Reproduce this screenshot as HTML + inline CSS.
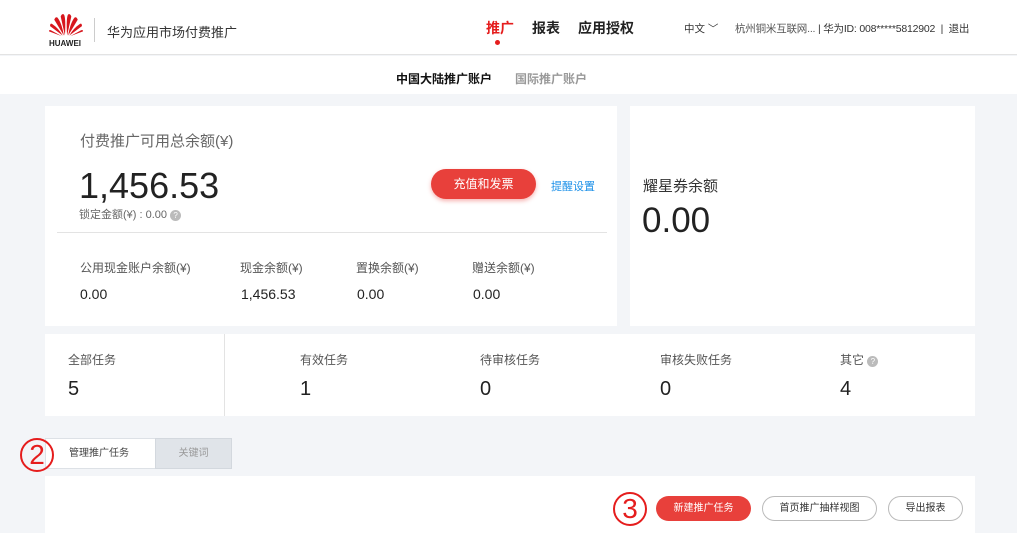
<!DOCTYPE html>
<html><head><meta charset="utf-8"><style>
*{margin:0;padding:0;box-sizing:border-box}
body{width:1017px;height:533px;overflow:hidden;background:#f3f5f8;font-family:"Liberation Sans","Noto Sans CJK SC",sans-serif;color:#333;position:relative}
.a{position:absolute;white-space:nowrap}
.w{position:absolute;background:#fff}
</style></head><body>
<div class="w" style="left:0;top:0;width:1017px;height:55px;border-bottom:1px solid #e3e3e3"></div>
<svg class="a" style="left:49px;top:12px" width="34" height="26" viewBox="0 0 32 22">
<g fill="#d7161d">
<path d="M15 21 L11 3 Q12 0 14 1 Q16 4 15 21Z"/>
<path d="M17 21 L21 3 Q20 0 18 1 Q16 4 17 21Z"/>
<path d="M14 21 L5 6 Q6 3 8 4 Q12 9 14 21Z"/>
<path d="M18 21 L27 6 Q26 3 24 4 Q20 9 18 21Z"/>
<path d="M13 21 L1 12 Q1 9 3 10 Q9 14 13 21Z"/>
<path d="M19 21 L31 12 Q31 9 29 10 Q23 14 19 21Z"/>
<path d="M12 21.5 L0 17 Q0 15 2 16 Z"/>
<path d="M20 21.5 L32 17 Q32 15 30 16 Z"/>
</g></svg>
<div class="a" style="left:49px;top:39px;font-size:8px;font-weight:bold;color:#222">HUAWEI</div>
<div class="a" style="left:94px;top:18px;width:1px;height:24px;background:#ccc"></div>
<div class="a" style="left:107px;top:22px;font-size:13px;color:#333">华为应用市场付费推广</div>
<div class="a" style="left:486px;top:18px;font-size:14px;font-weight:bold;color:#e51d1d">推广</div>
<div class="a" style="left:495px;top:40px;width:5px;height:5px;border-radius:50%;background:#e51d1d"></div>
<div class="a" style="left:532px;top:18px;font-size:14px;font-weight:bold;color:#222">报表</div>
<div class="a" style="left:578px;top:18px;font-size:14px;font-weight:bold;color:#222">应用授权</div>
<div class="a" style="left:684px;top:21px;font-size:10.5px;color:#333">中文 ﹀</div>
<div class="a" style="left:735px;top:21px;font-size:10.5px;color:#333;letter-spacing:-0.2px"><span style="color:#555">杭州铜米互联网...</span> | 华为ID: 008*****5812902 &nbsp;| &nbsp;退出</div>
<div class="w" style="left:0;top:56px;width:1017px;height:38px"></div>
<div class="a" style="left:396px;top:70px;font-size:12px;font-weight:bold;color:#111">中国大陆推广账户</div>
<div class="a" style="left:515px;top:70px;font-size:12px;font-weight:bold;color:#999">国际推广账户</div>

<div class="w" style="left:45px;top:106px;width:572px;height:220px"></div>
<div class="a" style="left:80px;top:130px;font-size:15px;color:#666">付费推广可用总余额(¥)</div>
<div class="a" style="left:79px;top:165px;font-size:36px;color:#222">1,456.53</div>
<div class="a" style="left:79px;top:206px;font-size:11px;color:#666">锁定金额(¥) : 0.00 <span style="display:inline-block;width:11px;height:11px;border-radius:50%;background:#bbb;color:#fff;font-size:8px;text-align:center;line-height:11px">?</span></div>
<div class="a" style="left:431px;top:169px;width:105px;height:30px;border-radius:15px;background:#e8403b;color:#fff;font-size:12px;text-align:center;line-height:30px;box-shadow:0 2px 4px rgba(232,64,59,.4)">充值和发票</div>
<div class="a" style="left:551px;top:178px;font-size:11px;color:#1a8fe8">提醒设置</div>
<div class="a" style="left:57px;top:232px;width:550px;height:1px;background:#e3e3e3"></div>
<div class="a" style="left:80px;top:259px;font-size:12px;color:#555">公用现金账户余额(¥)</div>
<div class="a" style="left:240px;top:259px;font-size:12px;color:#555">现金余额(¥)</div>
<div class="a" style="left:356px;top:259px;font-size:12px;color:#555">置换余额(¥)</div>
<div class="a" style="left:472px;top:259px;font-size:12px;color:#555">赠送余额(¥)</div>
<div class="a" style="left:80px;top:286px;font-size:14px;color:#222">0.00</div>
<div class="a" style="left:241px;top:286px;font-size:14px;color:#222">1,456.53</div>
<div class="a" style="left:357px;top:286px;font-size:14px;color:#222">0.00</div>
<div class="a" style="left:473px;top:286px;font-size:14px;color:#222">0.00</div>

<div class="w" style="left:630px;top:106px;width:345px;height:220px"></div>
<div class="a" style="left:643px;top:175px;font-size:15px;color:#333">耀星券余额</div>
<div class="a" style="left:642px;top:201px;font-size:35px;color:#222">0.00</div>

<div class="w" style="left:45px;top:334px;width:930px;height:82px"></div>
<div class="a" style="left:224px;top:334px;width:1px;height:82px;background:#e3e3e3"></div>
<div class="a" style="left:68px;top:351px;font-size:12px;color:#555">全部任务</div>
<div class="a" style="left:300px;top:351px;font-size:12px;color:#555">有效任务</div>
<div class="a" style="left:480px;top:351px;font-size:12px;color:#555">待审核任务</div>
<div class="a" style="left:660px;top:351px;font-size:12px;color:#555">审核失败任务</div>
<div class="a" style="left:840px;top:351px;font-size:12px;color:#555">其它 <span style="display:inline-block;width:11px;height:11px;border-radius:50%;background:#bbb;color:#fff;font-size:8px;text-align:center;line-height:11px">?</span></div>
<div class="a" style="left:68px;top:378px;font-size:20px;color:#222">5</div>
<div class="a" style="left:300px;top:378px;font-size:20px;color:#222">1</div>
<div class="a" style="left:480px;top:378px;font-size:20px;color:#222">0</div>
<div class="a" style="left:660px;top:378px;font-size:20px;color:#222">0</div>
<div class="a" style="left:840px;top:378px;font-size:20px;color:#222">4</div>

<div class="a" style="left:45px;top:438px;width:110px;height:31px;background:#fff;border:1px solid #dde1e6;border-right:none;font-size:10px;color:#444;line-height:29px;padding-left:23px">管理推广任务</div>
<div class="a" style="left:155px;top:438px;width:77px;height:31px;background:#e0e4e9;border:1px solid #d3d8de;font-size:10px;color:#999;text-align:center;line-height:29px">关键词</div>
<div class="a" style="left:20px;top:438px;width:34px;height:34px;border:2px solid #e51d1d;border-radius:50%;color:#e51d1d;font-size:28px;text-align:center;line-height:30px">2</div>

<div class="w" style="left:45px;top:476px;width:930px;height:57px"></div>
<div class="a" style="left:613px;top:492px;width:34px;height:34px;border:2px solid #e51d1d;border-radius:50%;color:#e51d1d;font-size:28px;text-align:center;line-height:30px">3</div>
<div class="a" style="left:656px;top:496px;width:95px;height:25px;border-radius:13px;background:#e8403b;color:#fff;font-size:10px;text-align:center;line-height:25px">新建推广任务</div>
<div class="a" style="left:762px;top:496px;width:115px;height:25px;border-radius:13px;border:1px solid #bbb;background:#fff;font-size:10px;color:#333;text-align:center;line-height:23px">首页推广抽样视图</div>
<div class="a" style="left:888px;top:496px;width:75px;height:25px;border-radius:13px;border:1px solid #bbb;background:#fff;font-size:10px;color:#333;text-align:center;line-height:23px">导出报表</div>
</body></html>
